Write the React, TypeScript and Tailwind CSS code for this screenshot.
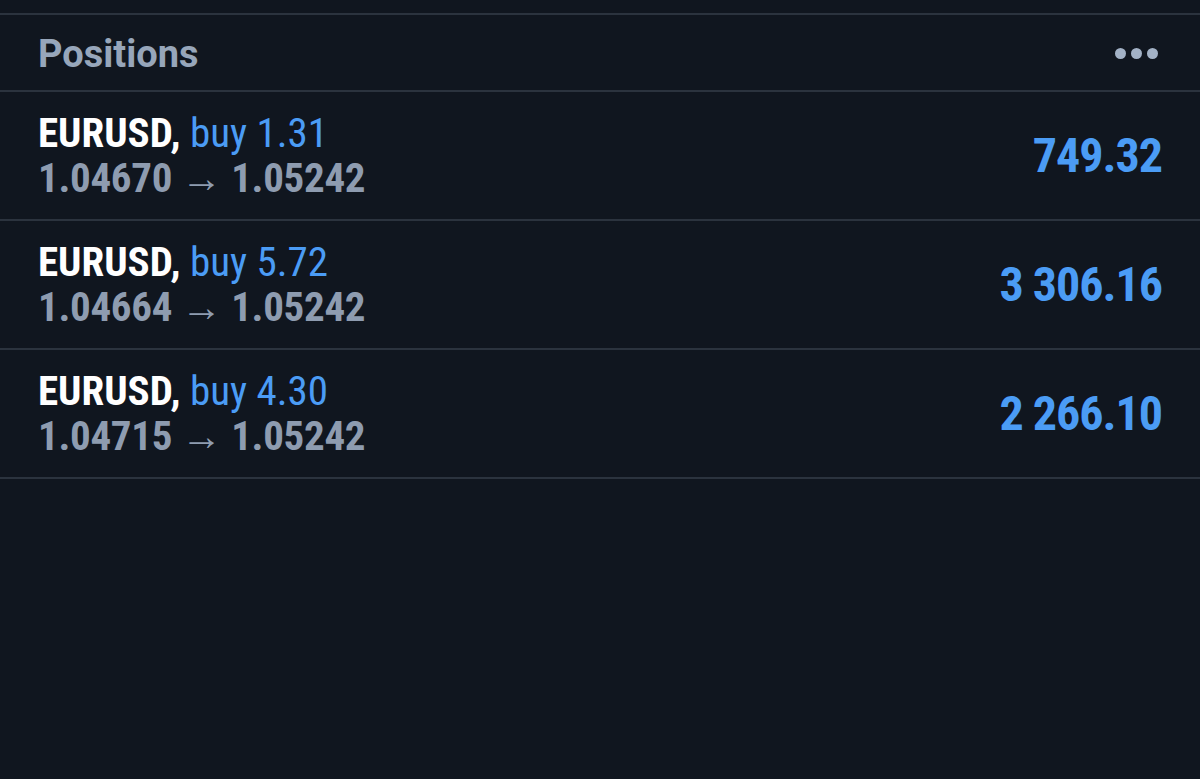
import React from 'react';

const positions = [
  { symbol: 'EURUSD', side: 'buy', volume: '1.31', open: '1.04670', current: '1.05242', profit: '749.32' },
  { symbol: 'EURUSD', side: 'buy', volume: '5.72', open: '1.04664', current: '1.05242', profit: '3 306.16' },
  { symbol: 'EURUSD', side: 'buy', volume: '4.30', open: '1.04715', current: '1.05242', profit: '2 266.10' },
];

const condensed = { fontFamily: '"Roboto Condensed", "Liberation Sans Narrow", Roboto, sans-serif' };

export default function App() {
  return (
    <div className="min-h-screen w-full bg-[#10161f] pt-[13px]" style={{ fontFamily: 'Roboto, sans-serif' }}>
      {/* Header */}
      <div className="flex h-[79px] items-center justify-between border-y-2 border-[#2b333e] pl-[38px] pr-[42px]">
        <span className="pt-[4px] text-[38px] font-bold text-[#97a6ba]">Positions</span>
        <div className="flex items-center gap-[5px] pt-[2px]">
          <span className="h-[11px] w-[11px] rounded-full bg-[#a3b2c6]" />
          <span className="h-[11px] w-[11px] rounded-full bg-[#a3b2c6]" />
          <span className="h-[11px] w-[11px] rounded-full bg-[#a3b2c6]" />
        </div>
      </div>

      {/* Rows */}
      {positions.map((p, i) => (
        <div
          key={i}
          className="flex h-[129px] items-center justify-between border-b-2 border-[#2b333e] pl-[38px] pr-[38px] font-stretch-condensed"
          style={condensed}
        >
          <div className="flex flex-col text-[41px] leading-[45px]">
            <div>
              <span className="font-bold text-white">{p.symbol},</span>{' '}
              <span className="text-[#4b9cf5]">
                {p.side} {p.volume}
              </span>
            </div>
            <div className="font-bold tracking-[-0.3px] text-[#8e9cb0]">
              {p.open} <span className="font-normal">→</span> {p.current}
            </div>
          </div>
          <span className="text-[48px] font-bold tracking-[-1px] text-[#4b9cf5]">{p.profit}</span>
        </div>
      ))}
    </div>
  );
}
